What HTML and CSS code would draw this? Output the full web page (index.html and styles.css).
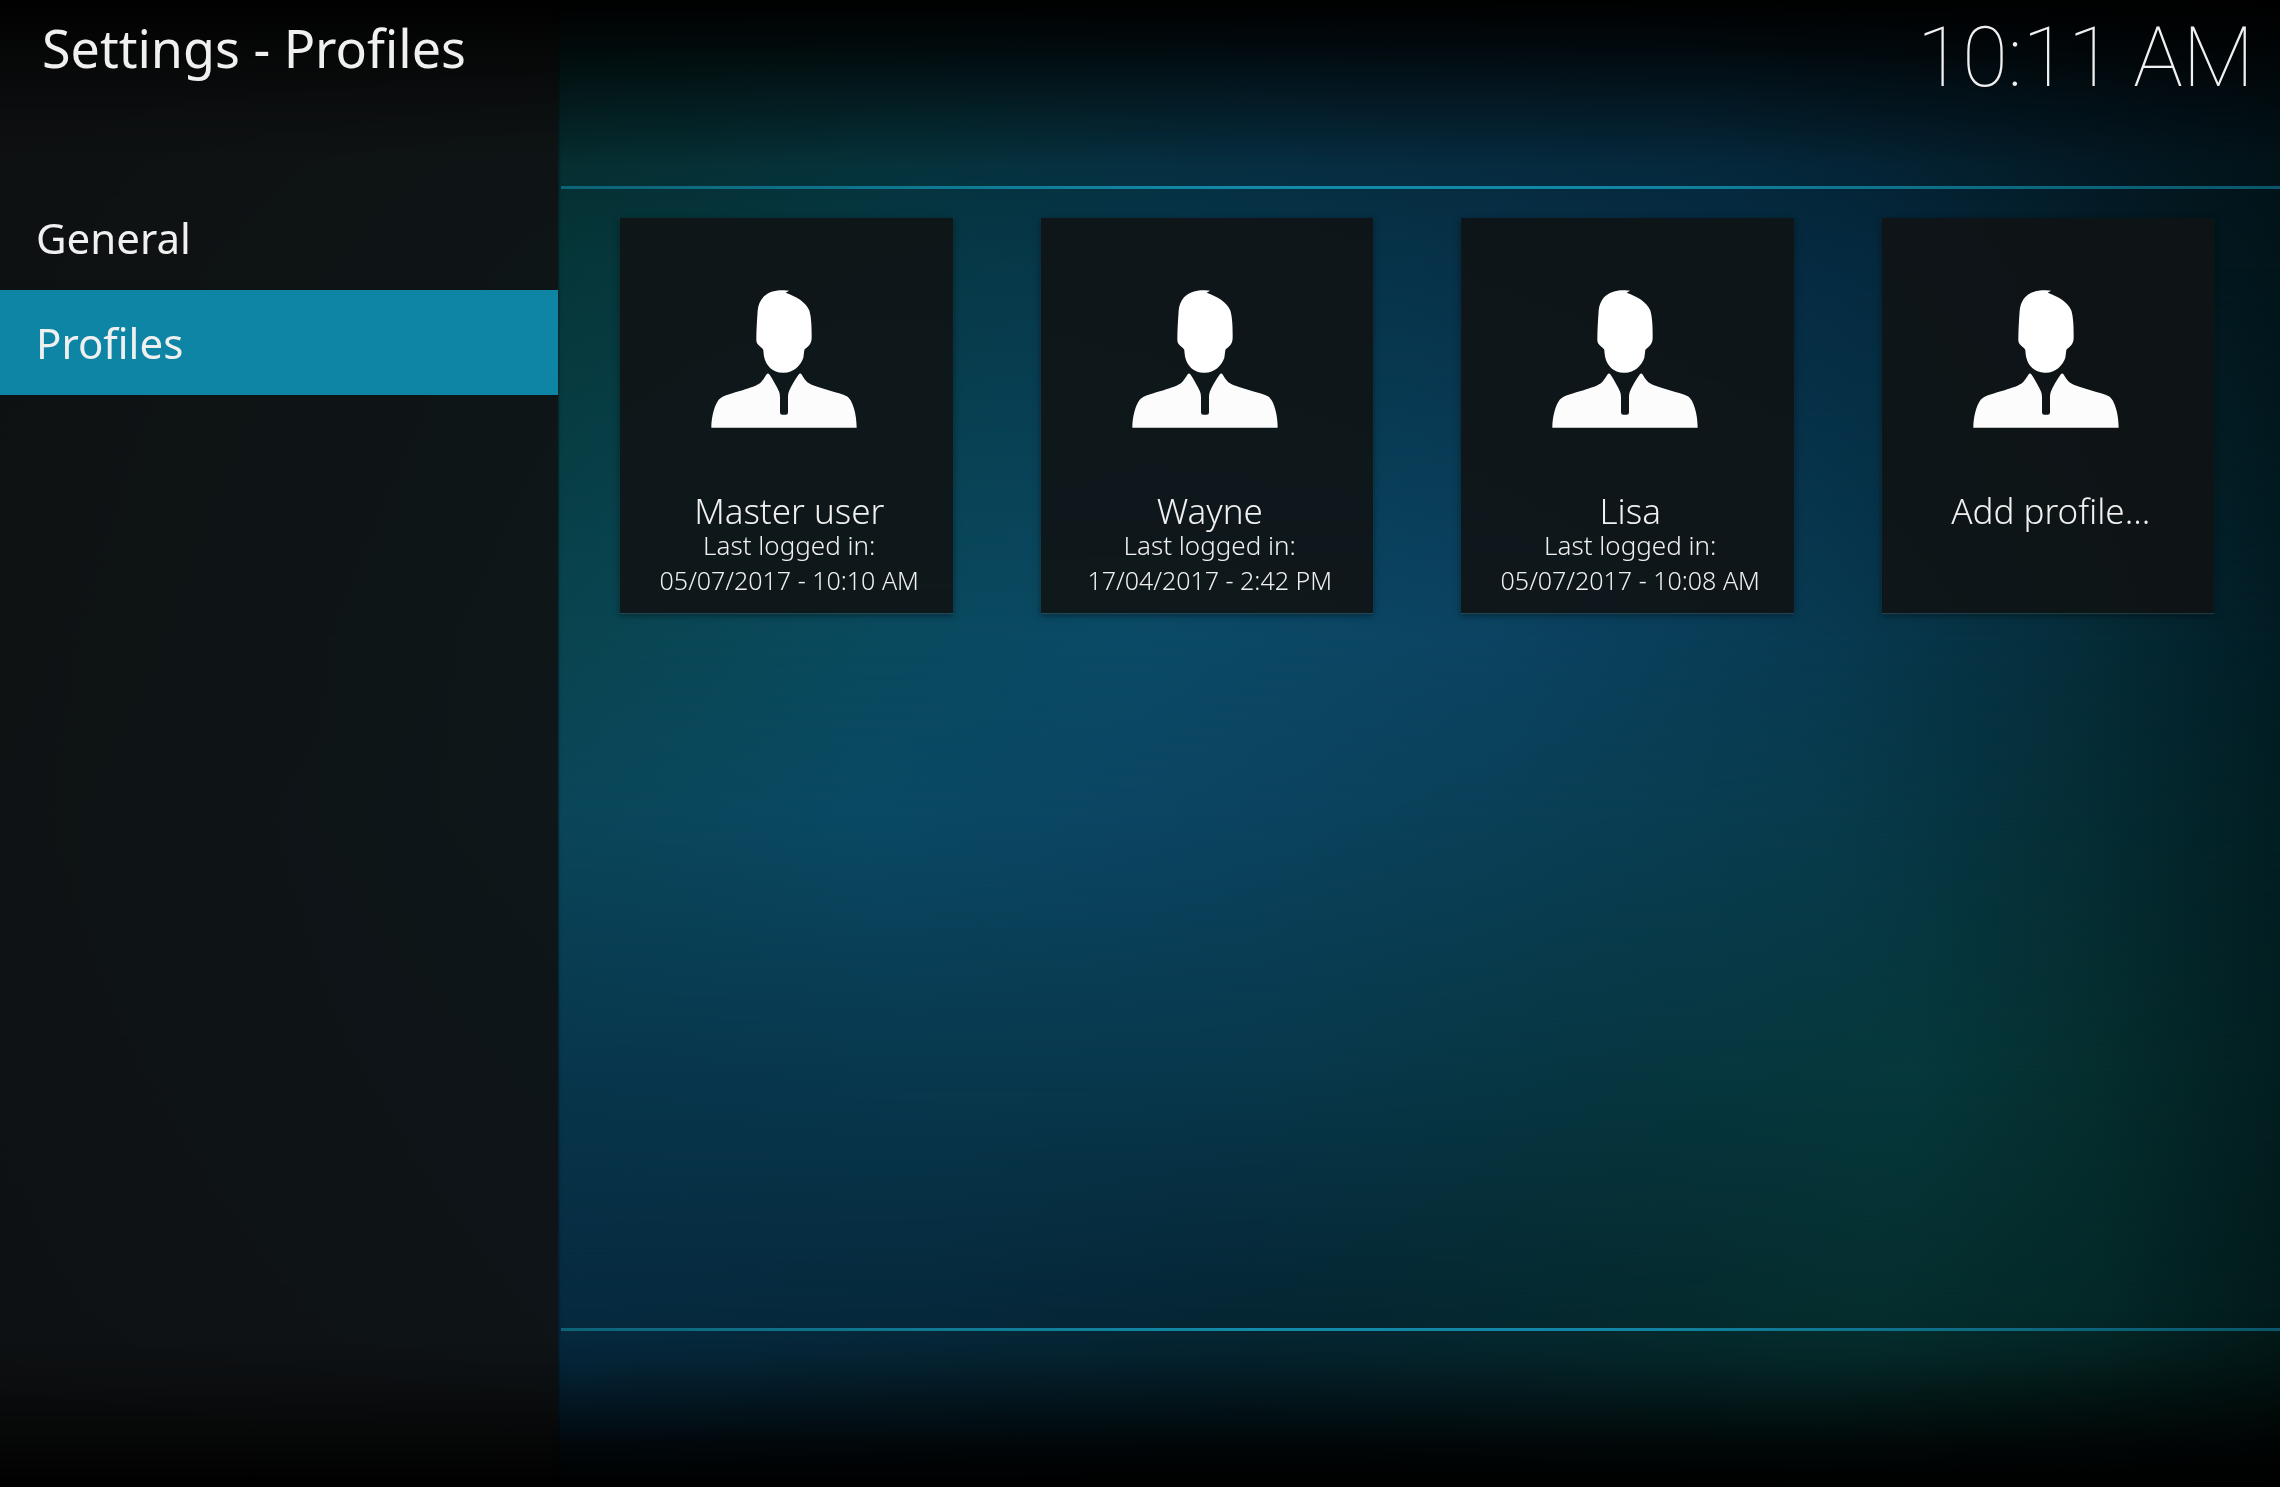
FILE: index.html
```html
<!DOCTYPE html>
<html lang="en">
<head>
<meta charset="utf-8">
<meta name="viewport" content="width=device-width, initial-scale=1">
<title>Settings - Profiles</title>
<link rel="stylesheet" href="styles.css">
</head>
<body>
<div class="backdrop" aria-hidden="true">
  <div class="band band-1"></div>
  <div class="band band-2"></div>
  <div class="band band-3"></div>
  <div class="band band-4"></div>
  <div class="band band-5"></div>
  <div class="band band-6"></div>
  <div class="band band-7"></div>
</div>
<svg class="symbols" aria-hidden="true" width="0" height="0">
  <symbol id="user" viewBox="65 59 438 413">
    <path fill="#fff" d="M299 61L289 67C320 78 350 95 360 120C366 140 367 170 367 200C367 218 360 226 346 236C344 240 344 250 342 262C335 285 312 307 284 307H280C250 307 230 285 225 262C222 250 223 240 221 236C210 225 201 222 201 208C201 180 203 150 205 120C208 90 225 65 265 60C275 59 290 59 299 61Z"/>
    <path fill="#fcfcfc" d="M66 472C66 440 75 405 88 388C100 374 130 368 160 359C180 352 205 345 215 335C222 328 227 318 232 311C235 308 238 309 241 313C250 327 262 348 269 363Q272 370 272 380V426Q272 433 279 433H289Q296 433 296 426V378Q296 370 299 362C306 345 317 328 328 312C331 308 335 309 337 312C342 320 346 328 354 335C365 344 395 352 420 360C440 366 460 370 474 378C490 390 502 430 502 472Z"/>
  </symbol>
</svg>
<div class="screen">
  <aside class="sidebar">
    <h1 class="title">Settings - Profiles</h1>
    <nav class="menu">
      <a class="menu-item" href="#general">General</a>
      <a class="menu-item selected" href="#profiles" aria-current="page">Profiles</a>
    </nav>
  </aside>
  <main class="content">
    <header class="topbar"><time class="clock" datetime="10:11">10:11 AM</time></header>
    <section class="profiles" aria-label="Profiles">
      <button class="card" type="button">
        <svg class="avatar" aria-hidden="true"><use href="#user"/></svg>
        <span class="name">Master user</span>
        <span class="login">Last logged in:</span>
        <span class="date">05/07/2017 - 10:10 AM</span>
      </button>
      <button class="card" type="button">
        <svg class="avatar" aria-hidden="true"><use href="#user"/></svg>
        <span class="name">Wayne</span>
        <span class="login">Last logged in:</span>
        <span class="date">17/04/2017 - 2:42 PM</span>
      </button>
      <button class="card" type="button">
        <svg class="avatar" aria-hidden="true"><use href="#user"/></svg>
        <span class="name">Lisa</span>
        <span class="login">Last logged in:</span>
        <span class="date">05/07/2017 - 10:08 AM</span>
      </button>
      <button class="card" type="button">
        <svg class="avatar" aria-hidden="true"><use href="#user"/></svg>
        <span class="name">Add profile...</span>
      </button>
    </section>
    <footer class="bottombar"></footer>
  </main>
</div>
</body>
</html>
```
FILE: styles.css
```css
* { box-sizing: border-box; }

body {
  margin: 0;
  background: #000;
  color: #f0f0f0;
  font-family: "Noto Sans", sans-serif;
}

/* Backdrop: horizontal colour bands, each fading in over the one before */
.backdrop {
  position: fixed;
  inset: 0;
  z-index: -1;
}

.backdrop::after {
  content: "";
  position: absolute;
  inset: 0;
  background:
    linear-gradient(to bottom, #000 0, rgba(0, 0, 0, .75) 50px, rgba(0, 0, 0, .35) 105px, transparent 165px),
    linear-gradient(to top, #000 0, rgba(0, 0, 0, .82) 40px, rgba(0, 0, 0, .45) 80px, rgba(0, 0, 0, .1) 125px, transparent 150px);
}

.band { position: absolute; inset: 0; }

.band-1 { background: linear-gradient(to right, #010808 0, #052a2c 25%, #052e36 40%, #062a3c 55%, #052638 75%, #03151e 95%, #021218 100%); }
.band-2 {
  background: linear-gradient(to right, #021010 0, #06373a 25%, #073a46 38%, #07384c 50%, #073048 68%, #052a40 82%, #031a22 95%, #02151a 100%);
  mask-image: linear-gradient(to bottom, transparent 7%, #000 18%);
}
.band-3 {
  background: linear-gradient(to right, #041818 0, #094550 25%, #0a4a5e 38%, #0b4a66 50%, #0b4462 65%, #083a52 80%, #052c38 92%, #021c24 100%);
  mask-image: linear-gradient(to bottom, transparent 18%, #000 43%);
}
.band-4 {
  background: linear-gradient(to right, #041a20 0, #0a465a 25%, #0a4963 38%, #0b4562 50%, #0a4058 65%, #083b4c 80%, #052e36 91%, #021e22 100%);
  mask-image: linear-gradient(to bottom, transparent 43%, #000 55%);
}
.band-5 {
  background: linear-gradient(to right, #041620 0, #08364c 25%, #08384e 40%, #08384c 55%, #073640 72%, #06383c 84%, #052e2e 92%, #031e20 100%);
  mask-image: linear-gradient(to bottom, transparent 55%, #000 72%);
}
.band-6 {
  background: linear-gradient(to right, #03101a 0, #062a3f 25%, #06293c 40%, #052634 55%, #052a2e 72%, #052e2e 82%, #042828 92%, #021a1a 100%);
  mask-image: linear-gradient(to bottom, transparent 72%, #000 88%);
}
.band-7 {
  background: linear-gradient(to right, #020a10 0, #05263a 25%, #052230 40%, #04202a 55%, #052828 80%, #031e1c 92%, #021412 100%);
  mask-image: linear-gradient(to bottom, transparent 88%, #000 95%);
}

.symbols { display: block; }

.screen {
  display: grid;
  grid-template-columns: 558px 1fr;
  min-height: 100vh;
}

.sidebar {
  background:
    linear-gradient(to bottom, #000 0, rgba(0, 0, 0, .6) 50px, rgba(0, 0, 0, .2) 110px, transparent 160px),
    linear-gradient(to top, #000 0, rgba(0, 0, 0, .6) 50px, rgba(0, 0, 0, .2) 100px, transparent 150px),
    rgba(15, 18, 19, .9);
  box-shadow: 1px 0 2px rgba(0, 0, 0, .4);
}

.title {
  margin: 0;
  padding: 12px 42px 0;
  height: 185px;
  font-size: 52px;
  line-height: 72px;
  font-weight: 400;
}

.menu { display: flex; flex-direction: column; }

.menu-item {
  padding: 0 36px;
  line-height: 105px;
  font-size: 42px;
  color: inherit;
  text-decoration: none;
}

.menu-item.selected { background: #0f85a5; }

.content {
  display: flex;
  flex-direction: column;
  padding-left: 3px;
}

.topbar,
.bottombar {
  --rule: linear-gradient(to right, #0d6378 0, #128aa8 40%, #1287a5 60%, #0a566a 100%);
}

.topbar {
  height: 189px;
  padding: 10px 26px 0;
  text-align: right;
  background: var(--rule) bottom / 100% 3px no-repeat;
}

.clock {
  font-family: Roboto, sans-serif;
  font-weight: 100;
  font-size: 83px;
  line-height: 96px;
}

.profiles {
  flex: 1;
  display: grid;
  grid-template-columns: repeat(4, 1fr);
  align-content: start;
  gap: 88px;
  padding: 29px 66px 29px 59px;
}

.card {
  display: flex;
  flex-direction: column;
  align-items: center;
  height: 395px;
  padding: 72px 0 0;
  border: 0;
  background: rgba(16, 19, 20, .9);
  box-shadow: 0 1px 1px rgba(70, 110, 120, .4), 0 2px 6px rgba(0, 0, 0, .5);
  color: inherit;
  font: inherit;
  font-weight: 300;
}

.avatar {
  width: 146px;
  height: 138px;
  margin: 0 4px 66px 0;
}

.name {
  padding-left: 6px;
  font-size: 35px;
  line-height: 34px;
}

.login,
.date {
  padding-left: 6px;
  font-size: 26px;
  line-height: 35px;
}

.date { font-size: 25px; }

.bottombar {
  height: 159px;
  background: var(--rule) top / 100% 3px no-repeat;
}
```
